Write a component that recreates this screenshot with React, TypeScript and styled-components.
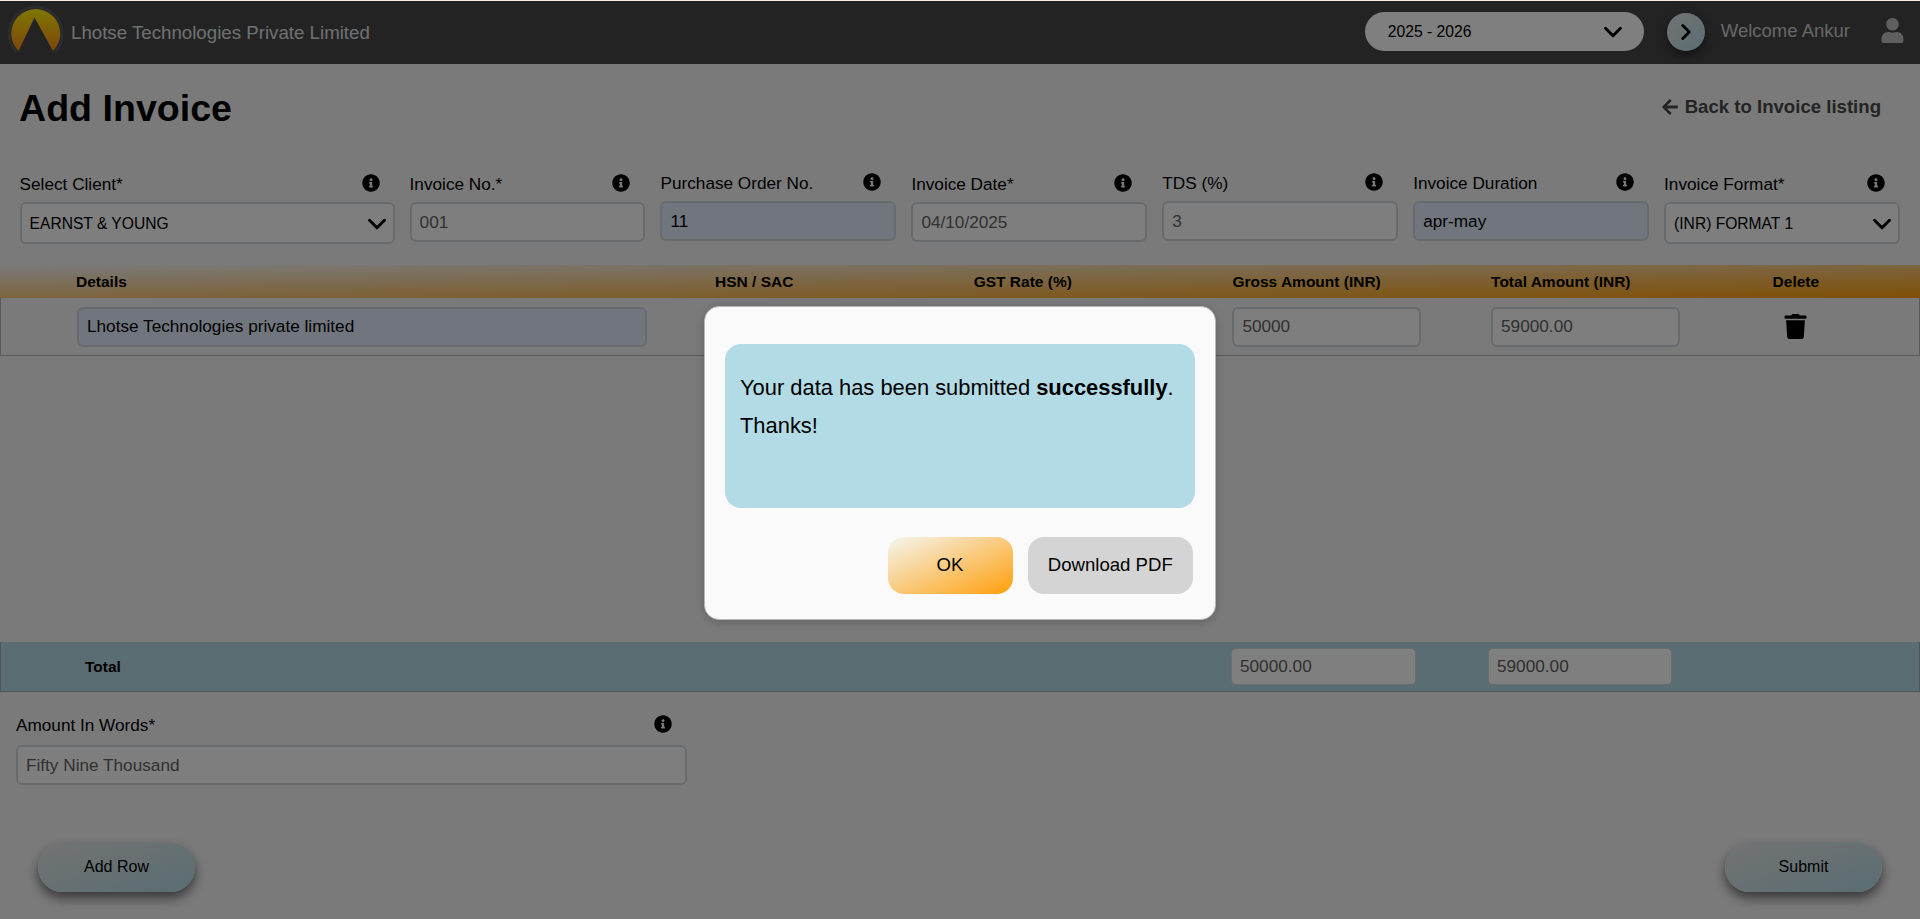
import React from 'react';
import styled, { createGlobalStyle } from 'styled-components';
import { ChevronDown, ChevronRight } from 'lucide-react';
import { FaArrowLeft, FaInfoCircle, FaTrash, FaUser } from 'react-icons/fa';

const GlobalStyle = createGlobalStyle`
  html, body {
    margin: 0;
    padding: 0;
    background: #fbe9dc;
    font-family: "Liberation Sans", Arial, sans-serif;
  }
`;

const Page = styled.div`
  position: relative;
  height: 918px;
  margin-top: 1px;
  overflow: hidden;
  background: #f5f5f5;
  color: #000;
`;

const Navbar = styled.header`
  display: flex;
  align-items: center;
  height: 63px;
  background: #464646;
`;

const Brand = styled.div`
  display: flex;
  align-items: center;
  flex: 1;
  padding-left: 7px;
  color: #dfe0e2;
  font-size: 18.7px;
`;

const BrandName = styled.span`
  margin-left: 8px;
`;

const YearSelect = styled.div`
  display: flex;
  align-items: center;
  justify-content: space-between;
  width: 279px;
  height: 39px;
  box-sizing: border-box;
  margin-bottom: 2px;
  padding: 0 16px 0 23px;
  border-radius: 20px;
  background: #fff;
  font-size: 15.7px;
`;

const RoundButton = styled.div`
  display: flex;
  align-items: center;
  justify-content: center;
  width: 38px;
  height: 38px;
  margin: 0 0 2px 23px;
  border-radius: 50%;
  background: linear-gradient(to bottom right, #e6e6e6, #b3dbe5);
  box-shadow: 0 4px 10px rgba(0, 0, 0, 0.5);
`;

const Welcome = styled.span`
  margin: 0 0 3px 16px;
  color: #cfcfcf;
  font-size: 18.5px;
`;

const UserSlot = styled.div`
  display: flex;
  margin: 0 15px 4px 30px;
  color: #c0bfc0;
`;

const TitleRow = styled.div`
  display: flex;
  align-items: center;
  justify-content: space-between;
  height: 88px;
  padding: 0 39px 0 19px;
  box-sizing: border-box;
`;

const Title = styled.h1`
  margin: 0;
  font-size: 37.6px;
  font-weight: 700;
`;

const BackLink = styled.a`
  display: flex;
  align-items: center;
  gap: 6px;
  margin-top: -2px;
  color: #484848;
  font-size: 18.6px;
  font-weight: 700;
`;

const FormGrid = styled.div`
  display: grid;
  grid-template-columns: 375px repeat(6, 1fr);
  column-gap: 15px;
  height: 113px;
  padding: 18px 20px 0 19.6px;
  box-sizing: border-box;
`;

const Field = styled.div<{ $required?: boolean }>`
  padding-top: ${(p) => (p.$required ? 1 : 0)}px;
`;

const LabelRow = styled.div`
  display: flex;
  align-items: center;
  justify-content: space-between;
  height: 24px;
  margin-bottom: 7px;
  padding-right: 15px;
  color: #000;
  font-size: 17.2px;
`;

const AmountLabelRow = styled(LabelRow)`
  margin-bottom: 9px;
`;

const LabelText = styled.span`
  padding-top: 2px;
`;

const TextInput = styled.input<{ $filled?: boolean }>`
  display: block;
  width: 100%;
  height: 40px;
  box-sizing: border-box;
  padding: 0 8px;
  border: 2px solid #d1d7dd;
  border-radius: 6px;
  outline: none;
  background: ${(p) => (p.$filled ? '#e2ebfa' : '#fdfdfd')};
  color: ${(p) => (p.$filled ? '#000' : '#626262')};
  font-family: inherit;
  font-size: 17.2px;
`;

const SelectBox = styled.div`
  display: flex;
  align-items: center;
  justify-content: space-between;
  height: 42px;
  box-sizing: border-box;
  padding: 1px 1px 0 8px;
  border: 2px solid #d1d7dd;
  border-radius: 6px;
  background: #fdfdfd;
  font-size: 15.6px;
`;

const TableHead = styled.div`
  display: grid;
  grid-template-columns: 639px repeat(3, 258.7px) 281.5px auto;
  align-items: center;
  height: 33px;
  padding-left: 76px;
  background: linear-gradient(to bottom right, #f5f5f5, #ff9f0a);
  font-size: 15.5px;
  font-weight: 700;
`;

const RowList = styled.div`
  height: 344px;
  box-sizing: border-box;
`;

const InvoiceRow = styled.div`
  display: grid;
  grid-template-columns: 570px 68px 189px 69.7px 189px 69.7px 189px 69.7px 189px 1fr;
  align-items: center;
  height: 58px;
  box-sizing: border-box;
  padding-left: 76px;
  border: 1px solid #b4b4b4;
  border-width: 0 1px 1px;
  color: #000;
`;

const DeleteSlot = styled.div`
  display: flex;
  justify-content: flex-start;
  padding-left: 103px;
  font-size: 25px;
`;

const TotalBar = styled.div`
  display: grid;
  grid-template-columns: 1146px 185px 72px 184px;
  align-items: center;
  height: 50px;
  box-sizing: border-box;
  padding-left: 84px;
  border: 1px solid #a0a8ab;
  border-top: 0;
  background: #b3dbe5;
  font-size: 15.5px;
  font-weight: 700;
`;

const TotalInput = styled.input`
  display: block;
  width: 100%;
  height: 37px;
  box-sizing: border-box;
  padding: 0 8px;
  border: 1px solid #d3dde0;
  border-radius: 5px;
  outline: none;
  background: #fff;
  color: #5e5e5e;
  font-family: inherit;
  font-size: 17.2px;
`;

const AmountField = styled.div`
  width: 671px;
  margin: 20px 0 0 16px;
`;

const Actions = styled.div`
  display: flex;
  justify-content: space-between;
  margin-top: 58px;
  padding: 0 38px;
`;

const PillButton = styled.button`
  width: 157px;
  height: 49px;
  padding: 0 0 1px;
  border: 0;
  border-radius: 25px;
  background: linear-gradient(to bottom right, #e6e6e6, #b3dbe5);
  box-shadow: 0 6px 12px rgba(0, 0, 0, 0.55);
  color: #000;
  font-family: inherit;
  font-size: 16px;
`;

const Overlay = styled.div`
  position: absolute;
  inset: 0;
  display: flex;
  align-items: center;
  justify-content: center;
  padding-top: 6px;
  box-sizing: border-box;
  background: rgba(0, 0, 0, 0.5);
`;

const Dialog = styled.div`
  width: 512px;
  height: 314px;
  box-sizing: border-box;
  padding: 37px 20px 0;
  border: 1px solid #b8b8b8;
  border-radius: 15px;
  background: #fafafa;
  box-shadow: 0 2px 10px rgba(0, 0, 0, 0.2);
`;

const Message = styled.div`
  height: 164px;
  box-sizing: border-box;
  padding: 25px 15px 0;
  border-radius: 16px;
  background: #b3dbe5;
  font-size: 21.9px;
  line-height: 38px;
`;

const MessageLine = styled.p`
  margin: 0;
`;

const DialogActions = styled.div`
  display: flex;
  justify-content: flex-end;
  gap: 15.5px;
  margin-top: 29px;
  padding-right: 2.5px;
`;

const DialogButton = styled.button<{ $primary?: boolean }>`
  width: ${(p) => (p.$primary ? 125 : 164.5)}px;
  height: 57px;
  padding: 0 0 2px;
  border: 0;
  border-radius: 16px;
  background: ${(p) =>
    p.$primary
      ? 'linear-gradient(to bottom right, #f5f5f0, #ff9f0a)'
      : '#d4d4d4'};
  color: #000;
  font-family: inherit;
  font-size: 18.6px;
`;

const Logo = () => (
  <svg width="56" height="56" viewBox="0 0 56 56" aria-hidden="true">
    <defs>
      <linearGradient id="logoGold" x1="0" y1="0" x2="0" y2="1">
        <stop offset="0" stopColor="#ffee00" />
        <stop offset="1" stopColor="#ff8a1e" />
      </linearGradient>
    </defs>
    <path
      d="M9.5 47 A26.5 26.5 0 1 1 48 47"
      fill="none"
      stroke="#55585c"
      strokeWidth="3"
    />
    <path
      d="M11.5 46 A24.5 24.5 0 1 1 46 46 L27.5 12.5 Z"
      fill="url(#logoGold)"
    />
  </svg>
);

interface FieldBoxProps {
  label: string;
  required?: boolean;
  children: React.ReactNode;
}

const FieldBox = ({ label, required, children }: FieldBoxProps) => (
  <Field $required={required}>
    <LabelRow>
      <LabelText>
        {label}
        {required && '*'}
      </LabelText>
      <FaInfoCircle size={18} color="#000" />
    </LabelRow>
    {children}
  </Field>
);

const App = () => {
  return (
    <>
      <GlobalStyle />
      <Page>
        <Navbar>
          <Brand>
            <Logo />
            <BrandName>Lhotse Technologies Private Limited</BrandName>
          </Brand>
          <YearSelect>
            <span>2025 - 2026</span>
            <ChevronDown size={30} strokeWidth={2.4} color="#000" />
          </YearSelect>
          <RoundButton>
            <ChevronRight size={26} strokeWidth={2.6} color="#000" />
          </RoundButton>
          <Welcome>Welcome Ankur</Welcome>
          <UserSlot>
            <FaUser size={25} />
          </UserSlot>
        </Navbar>

        <TitleRow>
          <Title>Add Invoice</Title>
          <BackLink>
            <FaArrowLeft size={18} />
            Back to Invoice listing
          </BackLink>
        </TitleRow>

        <FormGrid>
          <FieldBox label="Select Client" required>
            <SelectBox>
              EARNST &amp; YOUNG
              <ChevronDown size={30} strokeWidth={2.4} color="#000" />
            </SelectBox>
          </FieldBox>
          <FieldBox label="Invoice No." required>
            <TextInput readOnly value="001" />
          </FieldBox>
          <FieldBox label="Purchase Order No.">
            <TextInput readOnly $filled value="11" />
          </FieldBox>
          <FieldBox label="Invoice Date" required>
            <TextInput readOnly value="04/10/2025" />
          </FieldBox>
          <FieldBox label="TDS (%)">
            <TextInput readOnly value="3" />
          </FieldBox>
          <FieldBox label="Invoice Duration">
            <TextInput readOnly $filled value="apr-may" />
          </FieldBox>
          <FieldBox label="Invoice Format" required>
            <SelectBox>
              (INR) FORMAT 1
              <ChevronDown size={30} strokeWidth={2.4} color="#000" />
            </SelectBox>
          </FieldBox>
        </FormGrid>

        <TableHead>
          <span>Details</span>
          <span>HSN / SAC</span>
          <span>GST Rate (%)</span>
          <span>Gross Amount (INR)</span>
          <span>Total Amount (INR)</span>
          <span>Delete</span>
        </TableHead>

        <RowList>
          <InvoiceRow>
            <TextInput readOnly $filled value="Lhotse Technologies private limited" />
            <span />
            <TextInput readOnly value="" />
            <span />
            <TextInput readOnly value="" />
            <span />
            <TextInput readOnly value="50000" />
            <span />
            <TextInput readOnly value="59000.00" />
            <DeleteSlot>
              <FaTrash />
            </DeleteSlot>
          </InvoiceRow>
        </RowList>

        <TotalBar>
          <span>Total</span>
          <TotalInput readOnly value="50000.00" />
          <span />
          <TotalInput readOnly value="59000.00" />
        </TotalBar>

        <AmountField>
          <AmountLabelRow>
            <LabelText>Amount In Words*</LabelText>
            <FaInfoCircle size={18} color="#000" />
          </AmountLabelRow>
          <TextInput readOnly value="Fifty Nine Thousand" />
        </AmountField>

        <Actions>
          <PillButton>Add Row</PillButton>
          <PillButton>Submit</PillButton>
        </Actions>

        <Overlay>
          <Dialog>
            <Message>
              <MessageLine>
                Your data has been submitted <b>successfully</b>.
              </MessageLine>
              <MessageLine>Thanks!</MessageLine>
            </Message>
            <DialogActions>
              <DialogButton $primary>OK</DialogButton>
              <DialogButton>Download PDF</DialogButton>
            </DialogActions>
          </Dialog>
        </Overlay>
      </Page>
    </>
  );
};

export default App;
